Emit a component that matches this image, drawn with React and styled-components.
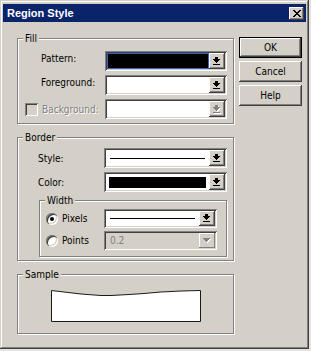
import React from 'react';
import styled, { createGlobalStyle } from 'styled-components';

const face = '#d4d0c8';
const shadow = '#808080';
const dark = '#404040';
const light = '#ffffff';

const raisedFrame = `box-shadow: inset -1px -1px ${dark}, inset 1px 1px ${face}, inset -2px -2px ${shadow}, inset 2px 2px ${light};`;
const raisedButton = `box-shadow: inset -1px -1px ${dark}, inset 1px 1px ${light}, inset -2px -2px ${shadow}, inset 2px 2px ${face};`;
const sunken = `box-shadow: inset 1px 1px ${shadow}, inset -1px -1px ${light}, inset 2px 2px ${dark}, inset -2px -2px ${face};`;

const GlobalStyle = createGlobalStyle`
  html, body {
    margin: 0;
    background: #e6e4e0;
  }
  body {
    font-family: "DejaVu Sans Condensed", "DejaVu Sans", sans-serif;
    font-stretch: condensed;
    font-size: 10px;
    color: #000;
  }
`;

const Window = styled.div`
  width: 309px;
  height: 349px;
  box-sizing: border-box;
  padding: 4px 3px 3px;
  background: ${face};
  ${raisedFrame}
  display: flex;
  flex-direction: column;
`;

const TitleBar = styled.div`
  height: 18px;
  background: #0a246a;
  display: flex;
  align-items: center;
  justify-content: space-between;
  padding: 0 2px 0 4px;
`;

const Title = styled.span`
  font-family: "Liberation Sans", Arial, sans-serif;
  font-weight: bold;
  font-size: 11px;
  color: #fff;
`;

const CloseButton = styled.div`
  width: 15px;
  height: 13px;
  background: ${face};
  ${raisedButton}
  display: flex;
  align-items: center;
  justify-content: center;
`;

const Body = styled.div`
  display: flex;
  align-items: flex-start;
  gap: 5px;
  padding-left: 14px;
`;

const LeftColumn = styled.div`
  width: 217px;
  margin-top: 16px;
  display: flex;
  flex-direction: column;
  gap: 13px;
`;

const ButtonColumn = styled.div`
  margin-top: 15px;
  display: flex;
  flex-direction: column;
  gap: 3px;
`;

const PushButton = styled.div`
  width: 63px;
  height: 21px;
  box-sizing: border-box;
  display: flex;
  align-items: center;
  justify-content: center;
  background: ${face};
  ${p => p.$default
    ? `border: 1px solid #000; box-shadow: inset -1px -1px ${dark}, inset 1px 1px ${light}, inset -2px -2px ${shadow};`
    : raisedButton}
`;

const Group = styled.div`
  position: relative;
  box-sizing: border-box;
  border: 1px solid ${shadow};
  box-shadow: inset 1px 1px ${light}, 1px 1px ${light};
  display: flex;
  flex-direction: column;
  gap: ${p => p.$gap || 4}px;
  padding: ${p => p.$pad};
  ${p => p.$width ? `width: ${p.$width}px;` : ''}
  ${p => p.$indent ? `margin: 4px 0 0 ${p.$indent}px;` : ''}
  ${p => p.$center ? 'align-items: center;' : ''}
`;

const GroupLabel = styled.span`
  position: absolute;
  top: -6px;
  left: 5px;
  padding: 0 2px;
  line-height: 12px;
  background: ${face};
`;

const Row = styled.div`
  display: grid;
  grid-template-columns: ${p => p.$label}px auto;
  align-items: center;
  height: ${p => p.$h || 20}px;
`;

const Label = styled.span`
  display: flex;
  align-items: center;
  gap: 4px;
  padding-left: ${p => p.$indent || 0}px;
  padding-bottom: ${p => p.$lift || 0}px;
  color: ${p => p.$disabled ? shadow : '#000'};
  text-shadow: ${p => p.$disabled ? `1px 1px ${light}` : 'none'};
`;

const CheckBox = styled.span`
  width: 13px;
  height: 13px;
  box-sizing: border-box;
  background: ${face};
  ${sunken}
`;

const Radio = styled.span`
  width: 12px;
  height: 12px;
  border-radius: 50%;
  background: #fff;
  box-shadow: inset 1px 1px ${shadow}, inset 2px 2px ${dark}, inset -1px -1px ${light}, inset -2px -2px ${face};
  display: flex;
  align-items: center;
  justify-content: center;
`;

const RadioDot = styled.span`
  width: 4px;
  height: 4px;
  border-radius: 50%;
  background: #000;
`;

const Combo = styled.div`
  width: ${p => p.$w}px;
  height: ${p => p.$h || 20}px;
  box-sizing: border-box;
  padding: 2px;
  display: flex;
  background: ${p => p.$disabled ? face : '#fff'};
  ${sunken}
`;

const Field = styled.div`
  flex: 1;
  display: flex;
  align-items: center;
  padding: ${p => p.$pad || '0'};
  color: ${p => p.$disabled ? shadow : '#000'};
`;

const Swatch = styled.div`
  flex: 1;
  align-self: stretch;
  background: #000;
  border: ${p => p.$focus ? '1px solid #3b5cc6' : 'none'};
`;

const LineSample = styled.div`
  flex: 1;
  height: 1px;
  background: #000;
`;

const DropButton = styled.div`
  width: 16px;
  display: flex;
  align-items: center;
  justify-content: center;
  background: ${face};
  ${p => p.$flat
    ? `box-shadow: inset -1px -1px ${shadow}, inset 1px 1px ${light};`
    : raisedButton}
`;

const CloseIcon = () => (
  <svg width="8" height="7" viewBox="0 0 8 7" shapeRendering="crispEdges">
    <path d="M0 0h2v1h-2z M6 0h2v1h-2z M1 1h2v1h-2z M5 1h2v1h-2z M2 2h4v1h-4z M3 3h2v1h-2z M2 4h4v1h-4z M1 5h2v1h-2z M5 5h2v1h-2z M0 6h2v1h-2z M6 6h2v1h-2z" fill="#000" />
  </svg>
);

const arrowPath = 'M2 0h3v2h-3z M0 2h7v1h-7z M1 3h5v1h-5z M2 4h3v1h-3z M3 5h1v1h-1z M0 7h7v1h-7z';

const DropArrow = ({ disabled }) => (
  <svg width="8" height="9" viewBox="0 0 8 9" shapeRendering="crispEdges">
    {disabled && <path d={arrowPath} fill={light} transform="translate(1 1)" />}
    <path d={arrowPath} fill={disabled ? shadow : '#000'} />
  </svg>
);

const PlainArrow = () => (
  <svg width="8" height="5" viewBox="0 0 8 5" shapeRendering="crispEdges">
    <path d="M0 0h7v1h-7z M1 1h5v1h-5z M2 2h3v1h-3z M3 3h1v1h-1z" fill={light} transform="translate(1 1)" />
    <path d="M0 0h7v1h-7z M1 1h5v1h-5z M2 2h3v1h-3z M3 3h1v1h-1z" fill={shadow} />
  </svg>
);

const SampleShape = () => (
  <svg width="150" height="32" viewBox="0 0 150 32">
    <path
      d="M0.5 0.5 L13 2 L30 4 L50 5.5 L60 5.5 L78 4.5 L93 3.5 L110 2 L130 1 L149.5 0.5 L149.5 31.5 L0.5 31.5 Z"
      fill="#fff"
      stroke="#1a1a1a"
      strokeWidth="1"
    />
  </svg>
);

const App = () => (
  <>
    <GlobalStyle />
    <Window>
      <TitleBar>
        <Title>Region Style</Title>
        <CloseButton><CloseIcon /></CloseButton>
      </TitleBar>
      <Body>
        <LeftColumn>
          <Group $pad="12px 6px 4px 7px">
            <GroupLabel>Fill</GroupLabel>
            <Row $label={80}>
              <Label $indent={16} $lift={5}>Pattern:</Label>
              <Combo $w={122}>
                <Field><Swatch $focus /></Field>
                <DropButton><DropArrow /></DropButton>
              </Combo>
            </Row>
            <Row $label={80}>
              <Label $indent={16} $lift={5}>Foreground:</Label>
              <Combo $w={122}>
                <Field />
                <DropButton><DropArrow /></DropButton>
              </Combo>
            </Row>
            <Row $label={80}>
              <Label $disabled><CheckBox />Background:</Label>
              <Combo $w={122}>
                <Field />
                <DropButton><DropArrow disabled /></DropButton>
              </Combo>
            </Row>
          </Group>

          <Group $pad="10px 6px 3px 7px">
            <GroupLabel>Border</GroupLabel>
            <Row $label={79}>
              <Label $indent={13}>Style:</Label>
              <Combo $w={123}>
                <Field $pad="0 4px"><LineSample /></Field>
                <DropButton><DropArrow /></DropButton>
              </Combo>
            </Row>
            <Row $label={79}>
              <Label $indent={13}>Color:</Label>
              <Combo $w={123}>
                <Field $pad="3px 3px 2px 3px"><Swatch /></Field>
                <DropButton><DropArrow /></DropButton>
              </Combo>
            </Row>
            <Group $pad="8px 8px 6px 6px" $gap={3} $width={188} $indent={14}>
              <GroupLabel>Width</GroupLabel>
              <Row $label={58} $h={19}>
                <Label><Radio><RadioDot /></Radio>Pixels</Label>
                <Combo $w={113} $h={19}>
                  <Field $pad="0 4px"><LineSample /></Field>
                  <DropButton><DropArrow /></DropButton>
                </Combo>
              </Row>
              <Row $label={58} $h={19}>
                <Label><Radio />Points</Label>
                <Combo $w={113} $h={19} $disabled>
                  <Field $pad="0 4px" $disabled>0.2</Field>
                  <DropButton $flat><PlainArrow /></DropButton>
                </Combo>
              </Row>
            </Group>
          </Group>

          <Group $pad="15px 0 11px" $center>
            <GroupLabel>Sample</GroupLabel>
            <SampleShape />
          </Group>
        </LeftColumn>

        <ButtonColumn>
          <PushButton $default>OK</PushButton>
          <PushButton>Cancel</PushButton>
          <PushButton>Help</PushButton>
        </ButtonColumn>
      </Body>
    </Window>
  </>
);

export default App;
